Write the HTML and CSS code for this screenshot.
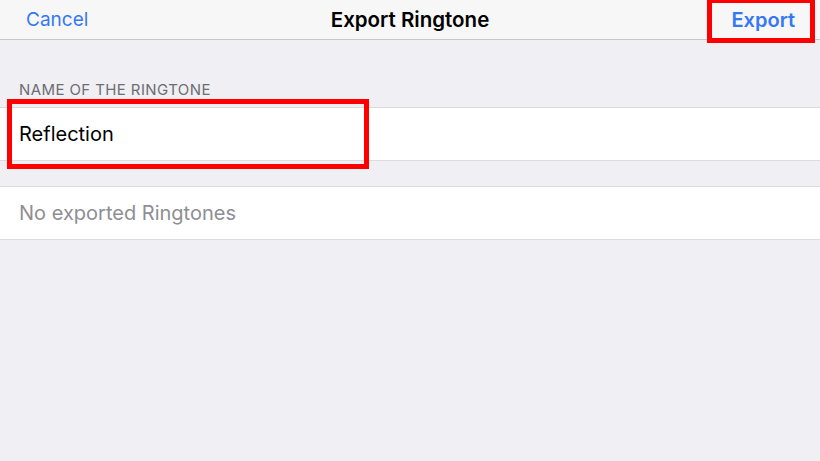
FILE: index.html
```html
<!DOCTYPE html>
<html>
<head>
<meta charset="utf-8">
<link rel="stylesheet" href="styles.css">
</head>
<body>
<div class="page">
  <header class="nav">
    <span class="nav-btn">Cancel</span>
    <span class="nav-title">Export Ringtone</span>
    <span class="nav-btn nav-export">Export</span>
  </header>
  <div class="section-header">NAME OF THE RINGTONE</div>
  <div class="row"><span class="row-text">Reflection</span></div>
  <div class="row row-second"><span class="row-text muted">No exported Ringtones</span></div>
  <div class="mark mark-export"></div>
  <div class="mark mark-name"></div>
</div>
</body>
</html>
```

FILE: styles.css
```css
html, body {
  margin: 0;
  padding: 0;
}
body {
  background: #efeff4;
  font-family: "Inter", "Noto Sans", "Liberation Sans", sans-serif;
}
.page {
  position: relative;
  width: 820px;
  height: 461px;
  overflow: hidden;
  background: #efeff4;
}
.nav {
  height: 39px;
  background: #f7f7f8;
  border-bottom: 1px solid #c6c6ca;
  display: flex;
  align-items: center;
  justify-content: space-between;
  padding: 0 25px 0 26px;
  position: relative;
}
.nav-btn {
  color: #3478f6;
  font-size: 19px;
}
.nav-export {
  font-size: 20px;
  font-weight: 600;
}
.nav-title {
  position: absolute;
  left: 0;
  right: 0;
  text-align: center;
  font-size: 20.5px;
  font-weight: 600;
  color: #000;
  pointer-events: none;
}
.section-header {
  padding: 41px 19px 9px;
  height: 17px;
  line-height: 17px;
  font-size: 15px;
  letter-spacing: 0.4px;
  color: #6d6d72;
}
.row {
  height: 52px;
  background: #fff;
  border-top: 1px solid #dcdce0;
  border-bottom: 1px solid #dcdce0;
  display: flex;
  align-items: center;
  padding: 0 19px;
}
.row-second {
  margin-top: 25px;
}
.row-text {
  font-size: 20px;
  color: #000;
}
.muted {
  color: #8e8e93;
}
.mark {
  position: absolute;
  border: 5px solid #ff0000;
  box-sizing: border-box;
}
.mark-export {
  left: 707px;
  top: -2px;
  width: 108px;
  height: 45px;
}
.mark-name {
  left: 7px;
  top: 99px;
  width: 362px;
  height: 70px;
}
```
